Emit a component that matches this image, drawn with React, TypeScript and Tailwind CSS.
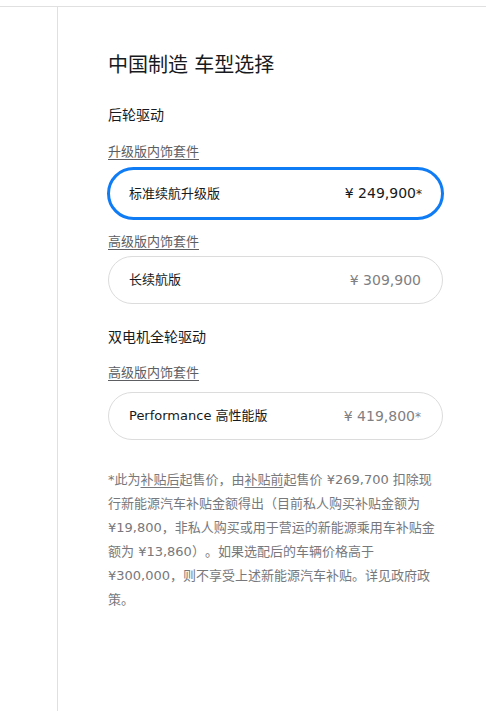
const fontStack = { fontFamily: '"DejaVu Sans", "Noto Sans CJK SC", sans-serif' }

type TrimProps = {
  label: string
  price: string
  asterisk?: boolean
  selected?: boolean
}

const TrimCard = ({ label, price, asterisk, selected }: TrimProps) => (
  <div
    className={
      selected
        ? 'ml-[-1px] flex h-[53px] w-[337px] items-center justify-between rounded-full border-[3px] border-[#0f7cf6] pl-[19px] pr-[19px]'
        : 'flex h-12 w-[335px] items-center justify-between rounded-full border border-[#dcdcdc] pl-5 pr-[21px]'
    }
  >
    <span className="text-[13px] text-[#171a20]">{label}</span>
    <span className={selected ? 'text-[14px] text-[#171a20]' : 'text-[14px] text-[#7f8083]'}>
      {price}
      {asterisk ? <span className="text-[12px]">*</span> : null}
    </span>
  </div>
)

const TrimLink = ({ children, className }: { children: string; className: string }) => (
  <a
    href="#"
    className={`block w-fit text-[13px] leading-5 text-[#5c5e62] underline decoration-[#5c5e62] underline-offset-[3px] ${className}`}
  >
    {children}
  </a>
)

export default function App() {
  return (
    <div className="min-h-[711px] bg-white [text-spacing-trim:space-all]" style={fontStack}>
      <div className="h-[7px] border-b border-[#e0e0e0]" />
      <div className="flex min-h-[704px]">
        <div className="w-[58px] shrink-0 border-r border-[#e0e0e0]" />
        <div className="flex flex-col pl-[50px] pt-[44px]">
          <h1 className="text-[20px] leading-[28px] font-normal text-[#171a20]">中国制造 车型选择</h1>

          <h2 className="mt-[26px] text-[14px] leading-5 text-[#171a20]">后轮驱动</h2>
          <TrimLink className="mt-[17px]">升级版内饰套件</TrimLink>
          <div className="mt-[5px]">
            <TrimCard label="标准续航升级版" price="¥ 249,900" asterisk selected />
          </div>

          <TrimLink className="mt-[12px]">高级版内饰套件</TrimLink>
          <div className="mt-[4px]">
            <TrimCard label="长续航版" price="¥ 309,900" />
          </div>

          <h2 className="mt-[23px] text-[14px] leading-5 text-[#171a20]">双电机全轮驱动</h2>
          <TrimLink className="mt-[16px]">高级版内饰套件</TrimLink>
          <div className="mt-[9px]">
            <TrimCard label="Performance 高性能版" price="¥ 419,800" asterisk />
          </div>

          <p className="mt-[28px] w-[335px] text-[13px] leading-6 text-[#77787c]">
            *此为<span className="underline underline-offset-[3px]">补贴后</span>起售价，由
            <span className="underline underline-offset-[3px]">补贴前</span>起售价 ¥269,700
            扣除现行新能源汽车补贴金额得出（目前私人购买补贴金额为 ¥19,800，非私人购买或用于营运的新能源乘用车补贴金额为
            ¥13,860）。如果选配后的车辆价格高于 ¥300,000，则不享受上述新能源汽车补贴。详见政府政策。
          </p>
        </div>
      </div>
    </div>
  )
}
